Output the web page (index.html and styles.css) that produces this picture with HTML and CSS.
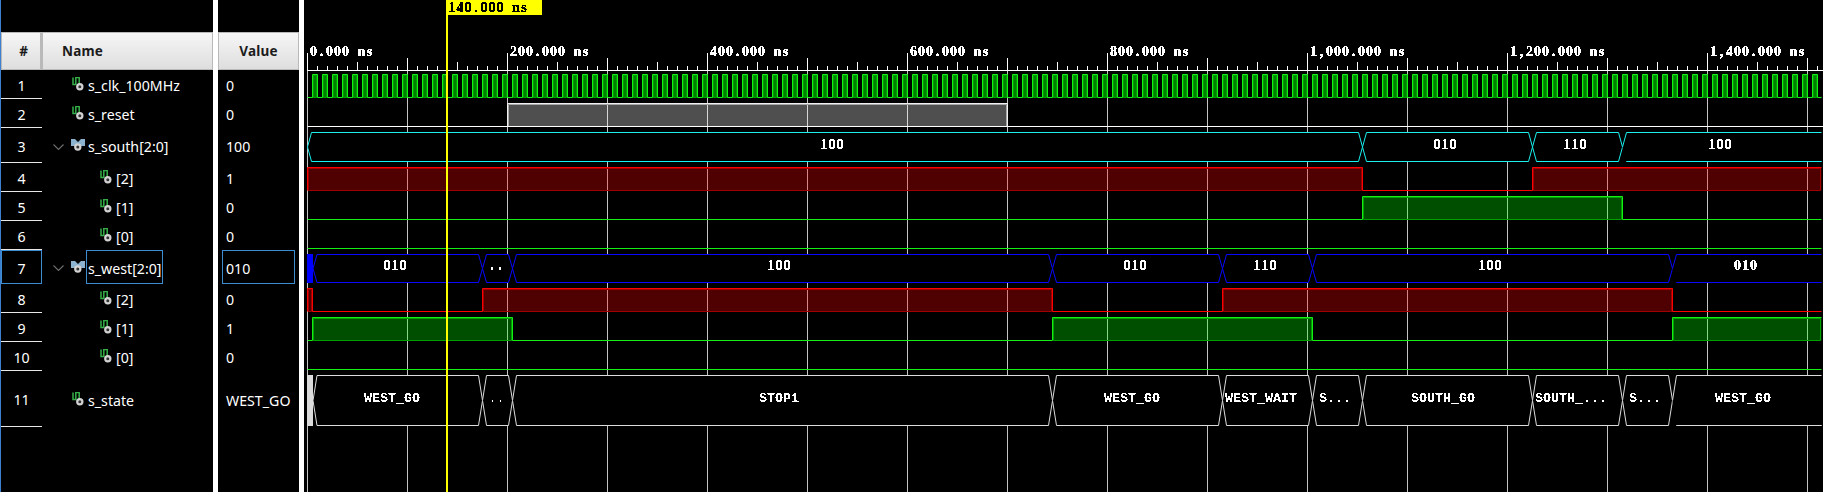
FILE: index.html
```html
<!DOCTYPE html>
<html lang="en">
<head>
<meta charset="utf-8">
<title>Waveform</title>
<link rel="stylesheet" href="styles.css">
</head>
<body>
<svg width="0" height="0" class="defs"><defs>
<symbol id="sig" viewBox="0 0 12 14"><path d="M1 .5v7h2.8V.5h3.4v6.5" fill="none" stroke="#35b048" stroke-width="1.5"/><circle cx="7.8" cy="9.8" r="2.6" fill="#333" stroke="#d2d2d2" stroke-width="2.2"/></symbol>
<symbol id="bus" viewBox="0 0 14 14"><path d="M0 1h4l3 3 3-3h4v7h-3.5l-3.5-1.5-3.5 1.5h-3.5z" fill="#8cb4d0"/><circle cx="6.8" cy="9" r="2.6" fill="#333" stroke="#d2d2d2" stroke-width="2.2"/></symbol>
<symbol id="chev" viewBox="0 0 11 6"><path d="M.5 .5l5 5 5-5" fill="none" stroke="#6e6e6e" stroke-width="1.1"/></symbol>
<filter id="crisp" x="-5%" y="-20%" width="110%" height="140%"><feComponentTransfer><feFuncA type="discrete" tableValues="0 0 1 1"/></feComponentTransfer></filter>
<filter id="crispb" x="-5%" y="-20%" width="110%" height="140%"><feComponentTransfer><feFuncA type="discrete" tableValues="0 1 1 1"/></feComponentTransfer></filter>
</defs></svg>
<main class="app">
  <section class="names">
    <div class="head"><div class="th th-num">#</div><div class="th th-name">Name</div></div>
    <div class="row"><div class="num">1</div><div class="name lvl0"><svg class="ic"><use href="#sig"/></svg><span>s_clk_100MHz</span></div></div>
    <div class="row"><div class="num">2</div><div class="name lvl0"><svg class="ic"><use href="#sig"/></svg><span>s_reset</span></div></div>
    <div class="row row-b3"><div class="num">3</div><div class="name lvlb"><svg class="ch"><use href="#chev"/></svg><svg class="ib"><use href="#bus"/></svg><span>s_south[2:0]</span></div></div>
    <div class="row"><div class="num">4</div><div class="name lvl1"><svg class="ic"><use href="#sig"/></svg><span>[2]</span></div></div>
    <div class="row"><div class="num">5</div><div class="name lvl1"><svg class="ic"><use href="#sig"/></svg><span>[1]</span></div></div>
    <div class="row"><div class="num">6</div><div class="name lvl1"><svg class="ic"><use href="#sig"/></svg><span>[0]</span></div></div>
    <div class="row row-b7"><div class="num sel">7</div><div class="name lvlb"><svg class="ch"><use href="#chev"/></svg><svg class="ib"><use href="#bus"/></svg><span class="sel selname">s_west[2:0]</span></div></div>
    <div class="row"><div class="num">8</div><div class="name lvl1"><svg class="ic"><use href="#sig"/></svg><span>[2]</span></div></div>
    <div class="row"><div class="num">9</div><div class="name lvl1"><svg class="ic"><use href="#sig"/></svg><span>[1]</span></div></div>
    <div class="row"><div class="num">10</div><div class="name lvl1"><svg class="ic"><use href="#sig"/></svg><span>[0]</span></div></div>
    <div class="row row-tall"><div class="num">11</div><div class="name lvl0"><svg class="ic"><use href="#sig"/></svg><span>s_state</span></div></div>
  </section>
  <div class="split"></div>
  <section class="values">
    <div class="head"><div class="th th-val">Value</div></div>
    <div class="row"><div class="val">0</div></div>
    <div class="row"><div class="val">0</div></div>
    <div class="row row-b3"><div class="val">100</div></div>
    <div class="row"><div class="val">1</div></div>
    <div class="row"><div class="val">0</div></div>
    <div class="row"><div class="val">0</div></div>
    <div class="row row-b7"><div class="val"><span class="sel selval">010</span></div></div>
    <div class="row"><div class="val">0</div></div>
    <div class="row"><div class="val">1</div></div>
    <div class="row"><div class="val">0</div></div>
    <div class="row row-tall"><div class="val">WEST_GO</div></div>
  </section>
  <div class="split"></div>
  <div class="wave"><svg id="w" viewBox="304 0 1519 492" width="1519" height="492"></svg></div>
</main>
<script src="wave.js"></script>
</body>
</html>
```
FILE: styles.css
```css
html, body { margin: 0; height: 100%; background: #000; overflow: hidden; }
.defs { position: absolute; }
.app { display: flex; height: 492px; width: 1823px; border-left: 1px solid #3f7fd0; box-sizing: border-box; background: #000; color: #fff; font: 14.2px "Noto Sans", "Open Sans", sans-serif; }
.names { width: 212px; padding-top: 32px; }
.values { width: 81px; padding-top: 32px; }
.split { width: 5px; background: #fff; }
.wave svg { display: block; }
.head { display: flex; height: 38px; }
.th { box-sizing: border-box; display: flex; align-items: center; font-weight: 700; font-size: 13.5px; color: #1b1b1b; background: linear-gradient(#f6f6f6, #dedede); border: 1px solid #b9b9b9; }
.th-num { width: 41px; justify-content: center; border-right-width: 2px; padding-left: 5px; }
.th-name { flex: 1; padding-left: 19px; letter-spacing: .2px; }
.th-val { flex: 1; justify-content: center; letter-spacing: .2px; }
.row { display: flex; height: 29px; box-sizing: border-box; }
.row-b3 { height: 35px; }
.row-b7 { height: 34px; }
.row-tall { height: 56px; }
.num { width: 41px; box-sizing: border-box; display: flex; align-items: center; justify-content: center; border-bottom: 1px solid #e8e8e8; padding-top: 2px; }
.name { flex: 1; display: flex; align-items: center; padding-top: 2px; box-sizing: border-box; white-space: nowrap; }
.lvl0 { padding-left: 30px; }
.lvl1 { padding-left: 58px; }
.lvlb { padding-left: 11px; }
.ic { width: 12px; height: 14px; margin-right: 4px; margin-top: -3px; flex: none; }
.ib { width: 14px; height: 14px; margin-right: 3px; margin-top: -3px; flex: none; }
.ch { width: 11px; height: 6px; margin-right: 7px; flex: none; }
.sel { box-sizing: border-box; border: 1px solid #3c8ed2; }
.name .sel { height: 34px; margin: -2px 0 0 -2px; padding: 2px 0 0 1px; display: flex; align-items: center; width: 77px; }
.val { padding: 2px 0 0 8px; display: flex; align-items: center; flex: 1; white-space: nowrap; }
.val .selval { margin: -2px 0 0 -4px; height: 34px; width: 73px; padding: 2px 0 0 3px; display: flex; align-items: center; }
.ser { font: 700 14px "Liberation Serif", serif; fill: #fff; text-anchor: middle; filter: url(#crispb); }
.mono { font: 700 13.33px "Liberation Mono", monospace; fill: #fff; text-anchor: middle; filter: url(#crisp); }
.cur-t { font: 700 14px "Liberation Serif", serif; fill: #000; text-anchor: middle; filter: url(#crispb); }
```
FILE: wave.js
```js
(function () {
  var NS = 'http://www.w3.org/2000/svg', svg = document.getElementById('w');
  function el(tag, attrs, text) {
    var e = document.createElementNS(NS, tag);
    for (var k in attrs) e.setAttribute(k, attrs[k]);
    if (text) e.textContent = text;
    svg.appendChild(e);
    return e;
  }
  var L = 1821.5, O = 307.5, i, x;
  function line(x1, y1, x2, y2, c) { el('line', { x1: x1, y1: y1, x2: x2, y2: y2, stroke: c, 'stroke-width': 1 }); }
  // fixed-pitch text: 8px cell per character, each glyph centred in its cell
  function fixed(str, left, y, cls) {
    var xs = [], n;
    for (n = 0; n < str.length; n++) xs.push(left + n * 8 + 4);
    el('text', { x: xs.join(' '), y: y, class: cls }, str);
  }
  function centred(cx, str, y, cls) { fixed(str, cx - str.length * 4, y, cls); }

  // grid
  for (i = 0; i <= 15; i++) line(O + i * 100, 70, O + i * 100, 492, '#c4c4c4');
  // ruler
  line(307, 70.5, 1823, 70.5, '#fff');
  for (i = 0; i <= 151; i++) {
    x = O + i * 10;
    if (x > 1823) break;
    var top = i % 20 === 0 ? 53 : i % 10 === 0 ? 58 : i % 5 === 0 ? 62 : 66;
    line(x, top, x, 70, '#fff');
  }
  ['0.000', '200.000', '400.000', '600.000', '800.000', '1,000.000', '1,200.000', '1,400.000'].forEach(function (t, n) {
    fixed(t + ' ns', O + n * 200 + 2, 56, 'ser');
  });

  // single-bit waveform
  function bit(hi, lo, edges, start, col, fill, dark) {
    var xs = [O].concat(edges, [L]), v = start, n;
    for (n = 0; n < xs.length - 1; n++) {
      if (v) {
        var a = xs[n], b = xs[n + 1];
        el('rect', { x: a, y: hi, width: b - a, height: lo - hi, fill: fill });
        el('path', { d: 'M' + (a + 1) + ' ' + lo + 'V' + (hi + 1) + 'H' + (b - 1) + 'V' + lo + 'Z', fill: 'none', stroke: dark });
      }
      v = !v;
    }
    v = start;
    var d = 'M' + O + ' ' + (v ? lo + 'L' + O + ' ' + hi : lo);
    for (n = 1; n < xs.length; n++) {
      d += 'L' + xs[n] + ' ' + (v ? hi : lo);
      if (n < xs.length - 1) { v = !v; d += 'L' + xs[n] + ' ' + (v ? hi : lo); }
    }
    el('path', { d: d, fill: 'none', stroke: col });
  }
  var G = '#14f014', GF = 'rgba(0,255,0,.31)', GD = '#00a000';
  var R = '#ff0000', RF = 'rgba(255,0,0,.31)', RD = '#a00000';

  // clock
  var clk = [];
  for (x = 312.5; x < L; x += 5) clk.push(x);
  bit(74.5, 97.5, clk, false, G, 'rgba(0,255,0,.5)', GD);
  // reset
  el('rect', { x: 507.5, y: 103.5, width: 500, height: 23, fill: 'rgba(255,255,255,.31)' });
  el('path', { d: 'M508.5 126V104.5H1006.5V126', fill: 'none', stroke: '#a8a8a8' });
  line(O, 126.5, 1823, 126.5, '#fff');
  el('path', { d: 'M507.5 126.5V103.5H1007.5V126.5', fill: 'none', stroke: '#f0f0f0' });

  // bus waveform
  function bus(top, bot, cuts, col, labels, ty, cls) {
    var mid = (top + bot) / 2, n;
    for (n = 0; n < cuts.length - 1; n++) {
      var a = cuts[n], b = cuts[n + 1], last = n === cuts.length - 2;
      var left = a + 4, right = last ? b : b - 4;
      var shape = 'M' + a + ' ' + mid + 'L' + left + ' ' + top + 'L' + right + ' ' + top + 'L' + b + ' ' + mid + 'L' + right + ' ' + bot + 'L' + left + ' ' + bot + 'Z';
      el('path', { d: shape, fill: '#000' });
      var p = 'M' + a + ' ' + mid + 'L' + left + ' ' + top + 'L' + right + ' ' + top;
      p += last ? 'M' + right + ' ' + bot : 'L' + b + ' ' + mid + 'L' + right + ' ' + bot;
      p += 'L' + left + ' ' + bot + 'Z';
      el('path', { d: p, fill: 'none', stroke: col });
    }
    labels.forEach(function (l) { centred(l[0], l[1], ty, cls); });
  }
  bus(132.5, 161.5, [O, 1362.5, 1532.5, 1622.5, L], '#19f0f0',
    [[832, '100'], [1445, '010'], [1575, '110'], [1720, '100']], 149, 'ser');
  bit(167.5, 190.5, [1362.5, 1532.5], true, R, RF, RD);
  bit(196.5, 219.5, [1362.5, 1622.5], false, G, GF, GD);
  bit(225.5, 248.5, [], false, G, GF, GD);

  var w7 = [313, 482.5, 512.5, 1052.5, 1222.5, 1312.5, 1672.5, L];
  bus(254.5, 282.5, w7, '#0808ff',
    [[395, '010'], [496, '..'], [779, '100'], [1135, '010'], [1265, '110'], [1490, '100'], [1745.5, '010']], 270, 'ser');
  el('rect', { x: 307, y: 254, width: 6, height: 29, fill: '#0000ff' });
  bit(288.5, 311.5, [312.5, 482.5, 1052.5, 1222.5, 1672.5], true, R, RF, RD);
  bit(317.5, 340.5, [312.5, 512.5, 1052.5, 1312.5, 1672.5], false, G, GF, GD);
  bit(346.5, 369.5, [], false, G, GF, GD);

  var s = [313, 482.5, 512.5, 1052.5, 1222.5, 1312.5, 1362.5, 1532.5, 1622.5, 1672.5, L];
  bus(375.5, 425.5, s, '#dcdcdc',
    [[392, 'WEST_GO'], [496.5, '..'], [779, 'STOP1'], [1132, 'WEST_GO'], [1261, 'WEST_WAIT'], [1335, 'S...'],
     [1443, 'SOUTH_GO'], [1571, 'SOUTH_...'], [1645, 'S...'], [1743, 'WEST_GO']], 402, 'mono');
  el('rect', { x: 307, y: 375, width: 6, height: 51, fill: '#dcdcdc' });

  // cursor
  el('rect', { x: 446, y: 0, width: 2, height: 492, fill: '#ffff00' });
  el('rect', { x: 446, y: 0, width: 96, height: 15, fill: '#ffff00' });
  fixed('140.000 ns', 448, 12, 'cur-t');
})();
```
